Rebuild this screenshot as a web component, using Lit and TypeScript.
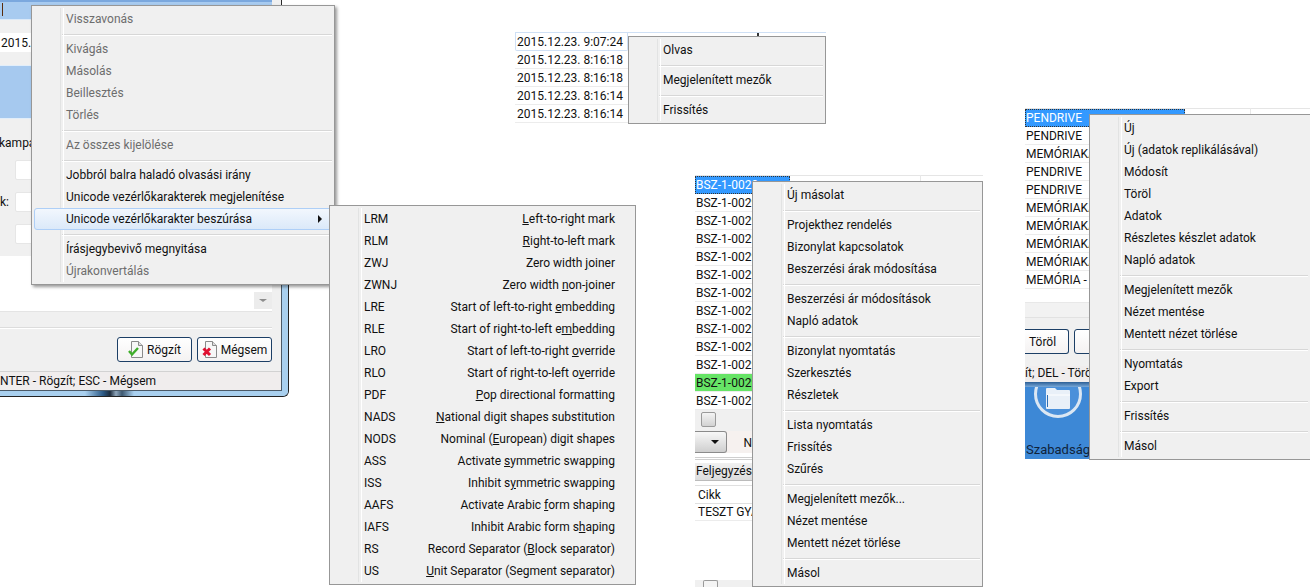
import { LitElement, html, css, svg } from "lit";
import { customElement } from "lit/decorators.js";
import { classMap } from "lit/directives/class-map.js";

type It = string | { t: string; off?: boolean; hot?: boolean; sub?: boolean };

const M1: It[] = [
  { t: "Visszavonás", off: true }, "-",
  { t: "Kivágás", off: true }, { t: "Másolás", off: true }, { t: "Beillesztés", off: true }, { t: "Törlés", off: true }, "-",
  { t: "Az összes kijelölése", off: true }, "-",
  "Jobbról balra haladó olvasási irány", "Unicode vezérlőkarakterek megjelenítése",
  { t: "Unicode vezérlőkarakter beszúrása", hot: true, sub: true }, "-",
  "Írásjegybevivő megnyitása", { t: "Újrakonvertálás", off: true },
];
const M2: It[] = ["Olvas", "-", "Megjelenített mezők", "-", "Frissítés"];
const M3: It[] = ["Új másolat", "-", "Projekthez rendelés", "Bizonylat kapcsolatok", "Beszerzési árak módosítása", "-",
  "Beszerzési ár módosítások", "Napló adatok", "-", "Bizonylat nyomtatás", "Szerkesztés", "Részletek", "-",
  "Lista nyomtatás", "Frissítés", "Szűrés", "-", "Megjelenített mezők...", "Nézet mentése", "Mentett nézet törlése", "-", "Másol"];
const M4: It[] = ["Új", "Új (adatok replikálásával)", "Módosít", "Töröl", "Adatok", "Részletes készlet adatok", "Napló adatok", "-",
  "Megjelenített mezők", "Nézet mentése", "Mentett nézet törlése", "-", "Nyomtatás", "Export", "-", "Frissítés", "-", "Másol"];

const SUB: [string, string, string, string][] = [
  ["LRM", "", "L", "eft-to-right mark"], ["RLM", "", "R", "ight-to-left mark"],
  ["ZWJ", "Zero width ", "j", "oiner"], ["ZWNJ", "Zero width ", "n", "on-joiner"],
  ["LRE", "Start of left-to-right ", "e", "mbedding"], ["RLE", "Start of right-to-left e", "m", "bedding"],
  ["LRO", "Start of left-to-right ", "o", "verride"], ["RLO", "Start of right-to-left o", "v", "erride"],
  ["PDF", "", "P", "op directional formatting"], ["NADS", "", "N", "ational digit shapes substitution"],
  ["NODS", "Nominal (", "E", "uropean) digit shapes"], ["ASS", "Activate ", "s", "ymmetric swapping"],
  ["ISS", "Inhibit s", "y", "mmetric swapping"], ["AAFS", "Activate Arabic ", "f", "orm shaping"],
  ["IAFS", "Inhibit Arabic form s", "h", "aping"], ["RS", "Record Separator (", "B", "lock separator)"],
  ["US", "", "U", "nit Separator (Segment separator)"],
];

const docIcon = (mark: unknown) => html`<svg class="bicon" width="16" height="17" viewBox="0 0 16 17">
  <path d="M3.500 .5h7l4 4v12h-11z" fill="#f7f7f7" stroke="#8a8a8a"/>
  <path d="M10.500 .5v4h4" fill="#ddd" stroke="#8a8a8a"/>${mark}</svg>`;
const check = svg`<path d="M1 10l3 3.500L10 7" fill="none" stroke="#3fae2a" stroke-width="2.4"/>`;
const cross = svg`<path d="M1.500 7.500l6.500 6.500M8 7.500l-6.500 6.500" fill="none" stroke="#e01030" stroke-width="3"/>`;

@customElement("app-root")
export class AppRoot extends LitElement {
  static styles = css`
    :host { display: block; position: relative; width: 1310px; height: 587px; overflow: hidden; background: #fff;
      font: 12px/16px Roboto, sans-serif; color: #111; }
    * { box-sizing: border-box; }

    .menu { position: absolute; border: 1px solid #979797; background: #f0f0f0; padding: 2px; z-index: 2; }
    .menu::before { content: ""; position: absolute; top: 2px; bottom: 2px; left: 28px; width: 2px;
      border-left: 1px solid #e2e3e3; border-right: 1px solid #fff; }
    .m1 { left: 31px; top: 5px; width: 304px; box-shadow: 2px 2px 3px rgba(0,0,0,.4); }
    .m2 { left: 628px; top: 36px; width: 198px; }
    .m3 { left: 752px; top: 181px; width: 231px; }
    .m4 { left: 1089px; top: 114px; width: 221px; border-right: 0; }
    .msub { left: 329px; top: 205px; width: 307px; z-index: 3; }

    .item { position: relative; display: flex; align-items: center; height: 22px; padding-left: 32px; white-space: nowrap; }
    .item.off { color: #6d6d6d; }
    .item.hot { margin-right: 0; border: 1px solid #aeCff7; border-radius: 3px; padding-left: 31px;
      background: linear-gradient(#f2f7fd, #dbe9f9); }
    .arrow { position: absolute; right: 9px; top: 6px; width: 0; height: 0;
      border-left: 4px solid #111; border-top: 4px solid transparent; border-bottom: 4px solid transparent; }
    .sep { height: 8px; margin-left: 28px; padding-top: 4px; }
    .sep i { display: block; height: 2px; border-top: 1px solid #d7d7d7; border-bottom: 1px solid #fff; }
    .subitem { justify-content: space-between; padding-right: 18px; }

    .cluster { position: absolute; }

    /* left window */
    .win { left: 0; top: 0; width: 289px; }
    .wtop { width: 282px; height: 256px; background: #f0f0f0; border-right: 1px solid #2a2a2a; white-space: nowrap; }
    .wide { width: 272px; }
    .f1 { height: 20px; background: #a8cbf0; border-top: 2px solid #7ba8de; border-bottom: 1px solid #dbe9f8; padding: 1px 0 0 2px; }
    .caret { display: block; width: 1px; height: 13px; background: #5a2c0c; }
    .f2 { margin-top: 13px; height: 19px; background: #fff; padding-left: 1px; line-height: 20px; }
    .f3 { margin-top: 13px; height: 54px; background: #a6c9ef; border: 1px solid #e2eefa; border-left: 0; }
    .lab { margin: 16px 0 9px -1px; height: 16px; }
    .inrow { display: flex; align-items: center; height: 20px; margin-bottom: 12px; }
    .inrow b { font-weight: 400; width: 15px; }
    .inrow i { flex: 1; height: 20px; background: #fff; border: 1px solid #e6e6e6; border-radius: 2px; }

    .wbot { border-right: 1px solid #222; border-bottom: 1px solid #222; border-bottom-right-radius: 6px; overflow: hidden;
      background: #a9d0ef; padding-right: 6px; }
    .inner { width: 282px; background: #f0f0f0; border-right: 1px solid #4b5a68; border-bottom: 1px solid #4b5a68; white-space: nowrap; }
    .ta { display: flex; justify-content: flex-end; align-items: flex-end; height: 56px; background: #fff; border-bottom: 1px solid #e4e4e4; }
    .sb { width: 18px; height: 17px; background: #ececec; display: flex; align-items: center; justify-content: center; margin-bottom: 2px; }
    .sb i { width: 0; height: 0; border-top: 3px solid #8d8d8d; border-left: 4px solid transparent; border-right: 4px solid transparent; }
    .rule { margin-top: 15px; height: 2px; border-top: 1px solid #dcdcdc; border-bottom: 1px solid #fff; }
    .btns { display: flex; justify-content: flex-end; gap: 5px; margin-top: 8px; padding-right: 9px; }
    .btn { display: flex; align-items: center; justify-content: center; gap: 3px; height: 25px;
      border: 1px solid #1c3f66; border-radius: 3px; background: linear-gradient(#fff, #f4f2f2); }
    .btn.w75 { width: 75px; }
    .status { margin-top: 9px; height: 19px; background: #f0eded; border-top: 1px solid #d2d2d2; line-height: 19px; }
    .strip { height: 5px; margin-right: -6px;
      background: linear-gradient(90deg, #a9d0ef 85px, #2c5a86 103px, #1d2c3d 110px, #8fa6bb 116px, #3d5870 122px, #a9d0ef 134px); }

    /* lists */
    .row { height: 18px; line-height: 18px; border-bottom: 1px solid #ececec; white-space: nowrap; padding-left: 2px; }
    .l2 { left: 515px; top: 32px; width: 311px; }
    .l2top { height: 1px; background: #cfe0f5; }
    .l2 .row { width: 113px; }
    .l2 .row.first { height: 18px; border: 1px solid #cfe0f5; border-top: 0; border-radius: 0 0 2px 2px; padding-left: 1px; }
    .tick { position: absolute; left: 242px; top: 1px; width: 2px; height: 3px; background: #333; }

    .l3 { left: 695px; top: 175px; width: 288px; }
    .hline { height: 1px; background: #e5e5e5; position: relative; }
    .vt { position: absolute; top: 0; width: 1px; height: 6px; background: #e8e8e8; }
    .l3 .vt { left: 225px; }
    .l3 .row { width: 57px; padding-left: 1px; }
    .row.sel { background: #3399ff; color: #fff; outline: 1px dotted #333; outline-offset: -1px; border-bottom: 0; }
    .l3 .row.sel { width: 95px; }
    .row.green { background: #66e466; }
    .track { height: 21px; width: 57px; background: #f0f0f0; margin-top: 0; padding: 2px 0 0 6px; }
    .thumb { width: 15px; height: 15px; border: 1px solid #9a9a9a; border-radius: 2px; background: linear-gradient(#f4f4f4, #d2d2d2); }
    .combo { display: flex; height: 22px; width: 57px; background: #f6f1ef; }
    .combo .box { width: 35px; height: 22px; border: 1px solid #8b8b8b; border-left: 0; border-radius: 0 3px 3px 0; background: linear-gradient(#f8f8f8, #cfcfcf);
      display: flex; align-items: center; justify-content: flex-end; padding-right: 7px; }
    .combo .box i { width: 0; height: 0; border-top: 4px solid #111; border-left: 4px solid transparent; border-right: 4px solid transparent; }
    .combo span { margin-left: 16px; line-height: 24px; }
    .dbl { margin-top: 4px; height: 3px; width: 57px; border-top: 1px solid #cfcfcf; border-bottom: 1px solid #cfcfcf; }
    .tabs { margin-top: 3px; height: 18px; width: 57px; background: linear-gradient(#f0f0f0, #dcdcdc); border-bottom: 1px solid #bbb; padding-left: 1px; line-height: 17px; white-space: nowrap; }
    .gh { margin-top: 4px; height: 19px; width: 57px; padding-left: 3px; line-height: 18px; border-top: 1px solid #e0e0e0; border-bottom: 1px solid #e0e0e0; }
    .gr { height: 17px; width: 57px; padding-left: 3px; line-height: 17px; border-bottom: 1px solid #ececec; white-space: nowrap; }
    .hsb { margin-top: 59px; height: 7px; width: 57px; background: #f0f0f0; padding-left: 8px; }
    .hsb i { display: block; width: 15px; height: 7px; border: 1px solid #9a9a9a; border-bottom: 0; border-radius: 2px 2px 0 0; background: #f4f4f4; }

    .l4 { left: 1025px; top: 108px; width: 285px; height: 352px; }
    .l4 .vt { left: 225px; }
    .l4 .row { width: 64px; padding-left: 1px; }
    .l4 .row.sel { width: 160px; }
    .low { margin-top: 13px; width: 64px; }
    .lband { height: 15px; background: #f2f2f2; border-top: 1px solid #e8e8e8; }
    .lbtns { height: 49px; background: #f0f0f0; padding-top: 11px; display: flex; gap: 5px; border-top: 1px solid #e2e2e2; }
    .lbtns .btn { height: 25px; width: 44px; border-left: 0; border-radius: 0 3px 3px 0; flex: none; justify-content: flex-start; padding-left: 4px; }
    .lbtns .btn.r { width: 40px; border-left: 1px solid #1c3f66; border-radius: 3px; }
    .lstat { height: 16px; background: #f0eded; line-height: 15px; white-space: nowrap; }
    .lfr { height: 5px; background: linear-gradient(#2c5f96, #78a8d8); }
    .ldesk { position: relative; height: 72px; background: #3d88d6; white-space: nowrap; }
    .ldesk svg { display: block; }
    .ldesk span { position: absolute; left: 1px; bottom: 0; line-height: 18px; font-size: 13px; color: #10233a; }
  `;

  private items(list: It[]) {
    return list.map((x) => {
      if (x === "-") return html`<div class="sep"><i></i></div>`;
      const o = typeof x === "string" ? { t: x } : x;
      return html`<div class=${classMap({ item: true, off: !!o.off, hot: !!o.hot })}>${o.t}${o.sub ? html`<span class="arrow"></span>` : ""}</div>`;
    });
  }

  render() {
    const dates = ["2015.12.23. 8:16:18", "2015.12.23. 8:16:18", "2015.12.23. 8:16:14", "2015.12.23. 8:16:14"];
    const l4 = ["PENDRIVE", "MEMÓRIAKÁR", "PENDRIVE", "PENDRIVE", "MEMÓRIAKÁR", "MEMÓRIAKÁR", "MEMÓRIAKÁR", "MEMÓRIAKÁR", "MEMÓRIA - DDR"];
    return html`
      <div class="cluster win">
        <div class="wtop">
          <div class="wide f1"><span class="caret"></span></div>
          <div class="wide f2">2015.12.23.</div>
          <div class="wide f3"></div>
          <div class="lab">kampány</div>
          <div class="wide inrow"><b></b><i></i></div>
          <div class="wide inrow"><b>k:</b><i></i></div>
          <div class="wide inrow"><b></b><i></i></div>
        </div>
        <div class="wbot">
          <div class="inner">
            <div class="wide ta"><div class="sb"><i></i></div></div>
            <div class="wide rule"></div>
            <div class="btns">
              <div class="btn w75">${docIcon(check)}Rögzít</div>
              <div class="btn w75">${docIcon(cross)}Mégsem</div>
            </div>
            <div class="status">NTER - Rögzít; ESC - Mégsem</div>
          </div>
          <div class="strip"></div>
        </div>
      </div>

      <div class="cluster l2">
        <div class="l2top"></div>
        <span class="tick"></span>
        <div class="row first">2015.12.23. 9:07:24</div>
        ${dates.map((d) => html`<div class="row">${d}</div>`)}
      </div>

      <div class="cluster l3">
        <div class="hline"><span class="vt"></span></div>
        <div class="row sel">BSZ-1-0029</div>
        ${[...Array(10)].map(() => html`<div class="row">BSZ-1-0029</div>`)}
        <div class="row green">BSZ-1-0029</div>
        <div class="row">BSZ-1-0029</div>
        <div class="track"><div class="thumb"></div></div>
        <div class="combo"><div class="box"><i></i></div><span>N</span></div>
        <div class="dbl"></div>
        <div class="tabs">Feljegyzések</div>
        <div class="gh">Cikk</div>
        <div class="gr">TESZT GYÁRTÓ</div>
        <div class="hsb"><i></i></div>
      </div>

      <div class="cluster l4">
        <div class="hline"><span class="vt"></span></div>
        <div class="row sel">PENDRIVE</div>
        ${l4.map((t) => html`<div class="row">${t}</div>`)}
        <div class="low">
          <div class="lband"></div>
          <div class="lbtns"><div class="btn">Töröl</div><div class="btn r"></div></div>
          <div class="lstat">ít; DEL - Töröl</div>
          <div class="lfr"></div>
          <div class="ldesk">
            <svg width="64" height="40" viewBox="0 0 64 40">
              <circle cx="33" cy="7" r="22.5" fill="#4a90da" stroke="#dbe7f3" stroke-width="3"/>
              <path d="M22 1h8l2 2h12a1 1 0 0 1 1 1v17a1 1 0 0 1-1 1H22a1 1 0 0 1-1-1V2a1 1 0 0 1 1-1z" fill="#e9f0f8"/>
              <path d="M22 8h23" stroke="#fff"/><path d="M22.500 8v12" stroke="#2f6fb5"/>
            </svg>
            <span>Szabadság</span>
          </div>
        </div>
      </div>

      <div class="menu m1">${this.items(M1)}</div>
      <div class="menu msub">
        ${SUB.map(([a, b, u, c]) => html`<div class="item subitem"><span>${a}</span><span>${b}<u>${u}</u>${c}</span></div>`)}
      </div>
      <div class="menu m2">${this.items(M2)}</div>
      <div class="menu m3">${this.items(M3)}</div>
      <div class="menu m4">${this.items(M4)}</div>
    `;
  }
}
